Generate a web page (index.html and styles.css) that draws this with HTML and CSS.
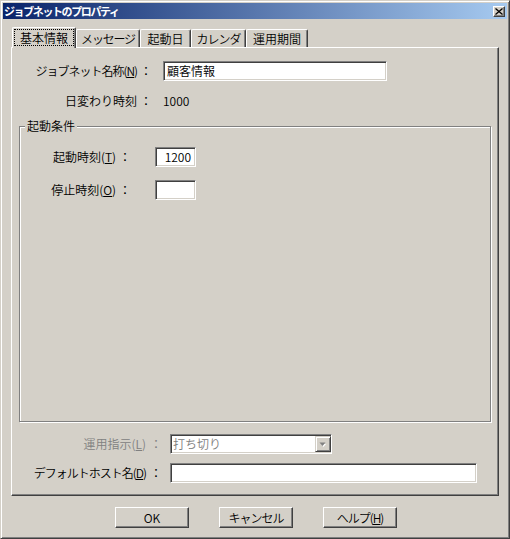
FILE: index.html
```html
<!DOCTYPE html>
<html lang="ja">
<head>
<meta charset="utf-8">
<title>ジョブネットのプロパティ</title>
<link rel="stylesheet" href="styles.css">
</head>
<body>
<div class="window">
  <div class="titlebar">
    <span class="title">ジョブネットのプロパティ</span>
    <span class="close"><svg width="8" height="7" viewBox="0 0 8 7"><path d="M0.5 0.5L7.5 6.5M7.5 0.5L0.5 6.5" stroke="#000" stroke-width="1.3" fill="none"/></svg></span>
  </div>
  <div class="client">
    <div class="tabs">
      <div class="tab sel"><span class="focus">基本情報</span></div>
      <div class="tab t-msg">メッセージ</div>
      <div class="tab t-day">起動日</div>
      <div class="tab t-cal">カレンダ</div>
      <div class="tab t-per">運用期間</div>
    </div>
    <div class="panel">
      <div class="row top-row">
        <span class="lbl lbl-top kana">ジョブネット名称(<u>N</u>)</span>
        <span class="colon colon-top">：</span>
        <div class="edit edit-name">顧客情報</div>
      </div>
      <div class="row top-row row-day">
        <span class="lbl lbl-top">日変わり時刻</span>
        <span class="colon colon-top">：</span>
        <span class="value">1000</span>
      </div>
      <div class="group">
        <span class="legend">起動条件</span>
        <div class="row grow first">
          <span class="lbl lbl-grp">起動時刻(<u>T</u>)</span>
          <span class="colon colon-grp">：</span>
          <div class="edit edit-time">1200</div>
        </div>
        <div class="row grow second">
          <span class="lbl lbl-grp">停止時刻(<u>O</u>)</span>
          <span class="colon colon-grp">：</span>
          <div class="edit edit-time"></div>
        </div>
      </div>
      <div class="row bot-row row-op">
        <span class="lbl lbl-bot disabled">運用指示(<u>L</u>)</span>
        <span class="colon colon-bot disabled">：</span>
        <div class="edit combo">
          <span class="combo-text">打ち切り</span>
          <span class="drop"><svg width="8" height="5" viewBox="0 0 8 5"><path d="M2 2h5l-2.5 3z" fill="#fff"/><path d="M0.5 0.5h6l-3 3.5z" fill="#808080"/></svg></span>
        </div>
      </div>
      <div class="row bot-row row-host">
        <span class="lbl lbl-bot kana">デフォルトホスト名(<u>D</u>)</span>
        <span class="colon colon-bot">：</span>
        <div class="edit edit-host"></div>
      </div>
    </div>
    <div class="buttons">
      <div class="btn">OK</div>
      <div class="btn kana">キャンセル</div>
      <div class="btn kana">ヘルプ(<u>H</u>)</div>
    </div>
  </div>
</div>
</body>
</html>
```
FILE: styles.css
```css
* { box-sizing: border-box; }

body {
  margin: 0;
  background: #d4d0c8;
  font: 350 12px/14px "Noto Sans CJK JP", "Noto Sans", sans-serif;
  color: #000;
}

u { text-decoration: underline; text-underline-offset: 1px; }

.window {
  width: 510px;
  height: 539px;
  background: #d4d0c8;
  border: 1px solid;
  border-color: #d4d0c8 #404040 #404040 #d4d0c8;
  box-shadow: inset 1px 1px #fff, inset -1px -1px #808080;
  padding: 2px;
  display: flex;
  flex-direction: column;
}

.titlebar {
  height: 16px;
  background: linear-gradient(to right, #0a246a, #a6caf0);
  display: flex;
  align-items: center;
  padding-left: 1px;
}

.title {
  flex: 1;
  color: #fff;
  font-weight: bold;
  font-size: 11px;
  letter-spacing: -1.4px;
  line-height: 14px;
}

.close {
  width: 12px;
  height: 11px;
  margin-right: 2px;
  background: #d4d0c8;
  border: 1px solid;
  border-color: #fff #404040 #404040 #fff;
  box-shadow: inset -1px -1px #808080;
  display: flex;
  align-items: center;
  justify-content: center;
}
.close svg { display: block; }

.client {
  padding: 8px 0 0 8px;
}

.tabs {
  display: flex;
  align-items: flex-end;
  height: 20px;
  margin-left: 1px;
}

.tab {
  height: 18px;
  border-top: 1px solid #fff;
  border-left: 1px solid #fff;
  border-right: 1px solid #404040;
  box-shadow: inset -1px 0 #808080;
  border-radius: 2px 2px 0 0;
  text-align: center;
  line-height: 17px;
  white-space: nowrap;
}
.tab.sel {
  width: 64px;
  height: 21px;
  margin-bottom: -1px;
  position: relative;
  z-index: 1;
  background: #d4d0c8;
}
.focus {
  display: block;
  margin: 1px 1px 0 1px;
  height: 17px;
  border: 1px dotted #000;
  line-height: 15px;
}
.t-msg { width: 64px; letter-spacing: -1.2px; }
.t-day { width: 51px; }
.t-cal { width: 55px; letter-spacing: -1px; }
.t-per { width: 62px; }

.panel {
  width: 488px;
  height: 449px;
  border: 1px solid;
  border-color: #fff #404040 #404040 #fff;
  box-shadow: inset -1px -1px #808080;
  padding-top: 13px;
}

.row {
  display: flex;
  align-items: center;
  height: 20px;
}

.lbl {
  text-align: right;
  white-space: nowrap;
}
.kana { letter-spacing: -1px; }
.colon { white-space: nowrap; }

.lbl-top { width: 125px; }
.colon-top { width: 26px; padding-left: 3px; }
.row-day { margin-top: 10px; }

.edit {
  height: 20px;
  background: #fff;
  border: 1px solid;
  border-color: #808080 #fff #fff #808080;
  box-shadow: inset 1px 1px #404040, inset -1px -1px #d4d0c8;
  padding: 0 3px;
  line-height: 18px;
  white-space: nowrap;
}
.edit-name { width: 224px; }

.group {
  position: relative;
  margin: 15px 0 0 7px;
  width: 472px;
  height: 296px;
  border: 1px solid #808080;
  box-shadow: inset 1px 1px #fff, 1px 1px #fff;
}
.legend {
  position: absolute;
  top: -8px;
  left: 5px;
  padding: 0 2px;
  background: #d4d0c8;
  line-height: 14px;
}

.grow.first { margin-top: 20px; }
.grow.second { margin-top: 13px; }
.lbl-grp { width: 96px; }
.colon-grp { width: 39px; padding-left: 3px; }
.edit-time { width: 41px; text-align: right; padding-right: 4px; }

.row-op { margin-top: 12px; }
.row-host { margin-top: 9px; }
.lbl-bot { width: 134px; }
.colon-bot { width: 24px; padding-left: 4px; }
.disabled { color: #808080; }

.combo {
  width: 162px;
  display: flex;
  align-items: center;
  padding: 0 0 0 2px;
}
.combo-text { flex: 1; color: #808080; }
.drop {
  width: 16px;
  height: 16px;
  background: #d4d0c8;
  border: 1px solid;
  border-color: #d4d0c8 #404040 #404040 #d4d0c8;
  box-shadow: inset 1px 1px #fff, inset -1px -1px #808080;
  display: flex;
  align-items: center;
  justify-content: center;
}
.drop svg { display: block; }
.edit-host { width: 307px; }

.buttons {
  display: flex;
  gap: 30px;
  margin-top: 11px;
  padding-left: 104px;
}
.btn {
  width: 74px;
  height: 21px;
  border: 1px solid;
  border-color: #fff #404040 #404040 #fff;
  box-shadow: inset -1px -1px #808080;
  text-align: center;
  line-height: 19px;
  white-space: nowrap;
}
```
